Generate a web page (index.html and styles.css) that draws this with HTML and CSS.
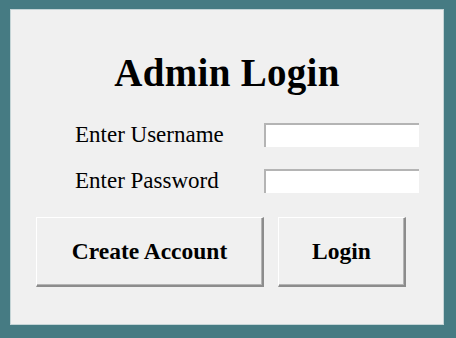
FILE: index.html
```html
<!DOCTYPE html>
<html>
<head>
<meta charset="utf-8">
<link rel="stylesheet" href="styles.css">
</head>
<body>
<div class="panel">
  <h1 class="title">Admin Login</h1>
  <div class="form">
    <label class="label">Enter Username</label>
    <div class="input"></div>
    <label class="label">Enter Password</label>
    <div class="input"></div>
  </div>
  <div class="actions">
    <button class="btn btn-create">Create Account</button>
    <button class="btn btn-login">Login</button>
  </div>
</div>
</body>
</html>
```
FILE: styles.css
```css
html, body {
  margin: 0;
  padding: 0;
}
body {
  width: 456px;
  height: 338px;
  background: #467b83;
  padding: 9px 12px 13px 10px;
  box-sizing: border-box;
  font-family: "Liberation Serif", "Times New Roman", serif;
  color: #000;
}
.panel {
  width: 434px;
  height: 316px;
  box-sizing: border-box;
  background: #f0f0f0;
  border: 1px solid #c4d4d6;
  display: flex;
  flex-direction: column;
}
.title {
  margin: 41px 0 0 0;
  font-size: 39px;
  line-height: 44px;
  font-weight: bold;
  text-align: center;
  letter-spacing: 0.3px;
}
.form {
  margin: 28px 0 0 64px;
  display: grid;
  grid-template-columns: 148px 155px;
  column-gap: 41px;
  row-gap: 22px;
  align-items: center;
}
.label {
  font-size: 23px;
  line-height: 24px;
  white-space: nowrap;
}
.input {
  height: 24px;
  box-sizing: border-box;
  background: #fff;
  border-top: 2px solid #b4b4b4;
  border-left: 2px solid #b4b4b4;
}
.actions {
  margin: 24px 0 0 25px;
  display: flex;
  gap: 14px;
}
.btn {
  height: 70px;
  box-sizing: border-box;
  background: #f0f0f0;
  border: none;
  border-top: 1px solid #fff;
  border-left: 1px solid #fff;
  border-right: 2px solid #8c8c8c;
  border-bottom: 2px solid #8c8c8c;
  box-shadow: inset -1px -1px 0 #b4b4b4;
  font-family: "Liberation Serif", "Times New Roman", serif;
  font-size: 23.5px;
  font-weight: bold;
  color: #000;
  padding: 0;
}
.btn-create {
  width: 228px;
}
.btn-login {
  width: 128px;
}
```
